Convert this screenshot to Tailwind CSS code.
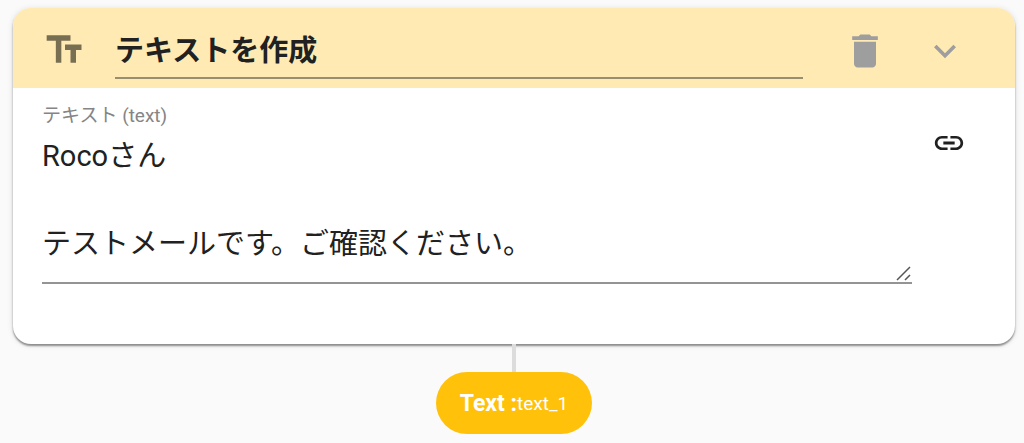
<!DOCTYPE html>
<html lang="ja">
<head>
    <meta charset="UTF-8">
    <meta name="viewport" content="width=device-width, initial-scale=1.0">
    <title>テキストを作成</title>

    <!-- Tailwind CSS -->
    <script src="https://cdn.jsdelivr.net/npm/@tailwindcss/browser@4"></script>
</head>
<body class="bg-[#fafafa] min-h-screen font-[Roboto,'Noto_Sans_CJK_JP',sans-serif] text-[#212121]">
    <main class="flex flex-col items-center pt-2 pl-[13px] pr-[9px]">
        <!-- Action Card -->
        <section class="w-full bg-white rounded-[18px] overflow-hidden shadow-[0_2px_2px_rgba(0,0,0,0.4),0_1px_6px_rgba(0,0,0,0.12)]">
            <!-- Card Header -->
            <header class="flex items-start h-20 bg-[#ffeab3] pl-[30px] pr-12">
                <svg class="w-11 h-11 shrink-0 mt-5 fill-[#786f53]" viewBox="0 0 24 24" aria-hidden="true">
                    <path d="M2 4v3h5v12h3V7h5V4H2zm19 5h-9v3h3v7h3v-7h3V9z"/>
                </svg>
                <input type="text" value="テキストを作成" aria-label="タイトル"
                       class="flex-1 min-w-0 ml-7 mt-4 h-[55px] pb-1.5 text-[29px] font-bold border-b-2 border-[#988e70] outline-none">
                <button type="button" class="ml-10 mt-[21px] shrink-0" aria-label="削除">
                    <svg class="w-11 h-11 fill-[#9e9e9e]" viewBox="0 0 24 24">
                        <path d="M6 19c0 1.100.9 2 2 2h8c1.100 0 2-.9 2-2V7H6v12zM19 4h-3.500l-1-1h-5l-1 1H5v2h14V4z"/>
                    </svg>
                </button>
                <button type="button" class="ml-9 mt-[21px] shrink-0" aria-label="折りたたむ">
                    <svg class="w-11 h-11 fill-[#9e9e9e]" viewBox="0 0 24 24">
                        <path d="M16.590 8.590 12 13.170 7.410 8.590 6 10l6 6 6-6z"/>
                    </svg>
                </button>
            </header>

            <!-- Card Body -->
            <div class="flex items-start pt-[18px] pb-[60px] pl-[29px] pr-[49px]">
                <div class="flex-1 min-w-0">
                    <label for="text-value" class="block text-[19px] leading-5 text-[#858585]">テキスト (text)</label>
                    <div class="relative mt-2">
                        <textarea id="text-value" rows="3"
                                  class="block w-full resize-none overflow-hidden pb-4 text-[29px] leading-[44px] border-b-2 border-[#949494] outline-none">Rocoさん

テストメールです。ご確認ください。</textarea>
                        <!-- Resize grip -->
                        <svg class="absolute right-0 bottom-0.5 w-4 h-4 stroke-[#555]" viewBox="0 0 16 16" fill="none" stroke-width="1.500" aria-hidden="true">
                            <path d="M1 14 14 1M9 14l5-5"/>
                        </svg>
                    </div>
                </div>
                <button type="button" class="ml-5 mt-5 shrink-0" aria-label="リンク">
                    <svg class="w-[34px] h-[34px] fill-[#212121]" viewBox="0 0 24 24">
                        <path d="M3.900 12c0-1.710 1.390-3.100 3.100-3.100h4V7H7c-2.760 0-5 2.240-5 5s2.240 5 5 5h4v-1.900H7c-1.710 0-3.100-1.390-3.100-3.100zM8 13h8v-2H8v2zm9-6h-4v1.900h4c1.710 0 3.100 1.390 3.100 3.100s-1.390 3.100-3.100 3.100h-4V17h4c2.760 0 5-2.240 5-5s-2.240-5-5-5z"/>
                    </svg>
                </button>
            </div>
        </section>

        <!-- Output -->
        <div class="relative w-1 h-7 bg-[#dcdcdc]"></div>
        <div class="flex items-center h-[62px] px-6 pt-0.5 rounded-full bg-[#ffc10a] text-white">
            <span class="text-[23px] font-bold">Text :</span>
            <span class="text-[19px]">text_1</span>
        </div>
    </main>
</body>
</html>
